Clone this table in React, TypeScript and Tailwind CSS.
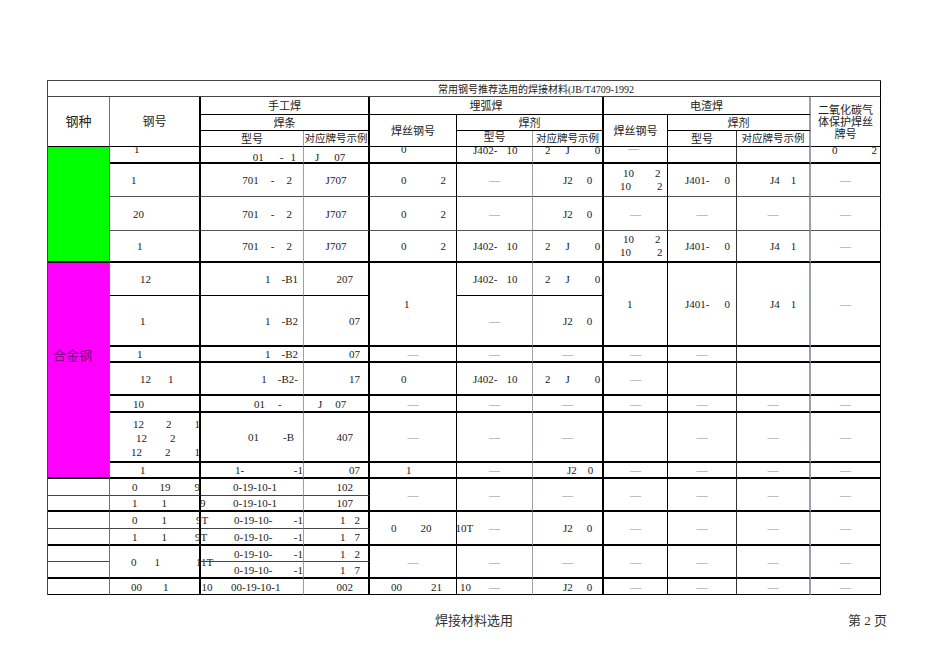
import React from 'react';

const COL: Record<number, string> = {
  1: 'col-start-1', 2: 'col-start-2', 3: 'col-start-3', 4: 'col-start-4', 5: 'col-start-5', 6: 'col-start-6',
  7: 'col-start-7', 8: 'col-start-8', 9: 'col-start-9', 10: 'col-start-10', 11: 'col-start-11',
};
const CSPAN: Record<number, string> = { 1: 'col-span-1', 2: 'col-span-2', 3: 'col-span-3', 11: 'col-span-11' };
const ROW: Record<number, string> = {
  1: 'row-start-1', 2: 'row-start-2', 3: 'row-start-3', 4: 'row-start-4', 5: 'row-start-5', 6: 'row-start-6',
  7: 'row-start-7', 8: 'row-start-8', 9: 'row-start-9', 10: 'row-start-10', 11: 'row-start-11', 12: 'row-start-12',
  13: 'row-start-13', 14: 'row-start-14', 15: 'row-start-15', 16: 'row-start-16', 17: 'row-start-17',
  18: 'row-start-18', 19: 'row-start-19', 20: 'row-start-20', 21: 'row-start-21', 22: 'row-start-22',
};
const RSPAN: Record<number, string> = { 1: 'row-span-1', 2: 'row-span-2', 3: 'row-span-3', 4: 'row-span-4', 7: 'row-span-7' };

// right edge line per column
const RIGHT: Record<number, string> = {
  1: 'border-r border-r-gray-500',
  2: 'border-r-2 border-r-black',
  3: 'border-r border-r-gray-400',
  4: 'border-r-2 border-r-black',
  5: 'border-r border-r-black',
  6: 'border-r border-r-gray-400',
  7: 'border-r-2 border-r-black',
  8: 'border-r border-r-black',
  9: 'border-r border-r-[#333]',
  10: 'border-r-2 border-r-gray-400',
  11: 'border-r border-r-black',
};

// bottom line per row
const BOTTOM: Record<number, string> = {
  1: 'border-b border-b-[#444]',
  2: 'border-b border-b-black',
  3: 'border-b border-b-black',
  4: 'border-b border-b-black',
  5: 'border-b-2 border-b-black',
  6: 'border-b border-b-[#555]',
  7: 'border-b border-b-[#555]',
  8: 'border-b-2 border-b-black',
  9: 'border-b border-b-black',
  10: 'border-b-2 border-b-black',
  11: 'border-b-2 border-b-black',
  12: 'border-b-2 border-b-black',
  13: 'border-b-2 border-b-black',
  14: 'border-b-2 border-b-black',
  15: 'border-b-2 border-b-black',
  16: 'border-b border-b-[#444]',
  17: 'border-b-2 border-b-black',
  18: 'border-b border-b-[#444]',
  19: 'border-b-2 border-b-black',
  20: 'border-b border-b-[#444]',
  21: 'border-b-2 border-b-black',
  22: 'border-b border-b-black',
};

type CellProps = {
  c: number;
  r: number;
  cs?: number;
  rs?: number;
  al?: string;
  bg?: string;
  children?: React.ReactNode;
};

const Cell: React.FC<CellProps> = ({ c, r, cs = 1, rs = 1, al = 'items-center justify-center', bg = '', children }) => {
  const lastC = c + cs - 1;
  const lastR = r + rs - 1;
  return (
    <div className={`flex whitespace-pre ${COL[c]} ${CSPAN[cs]} ${ROW[r]} ${RSPAN[rs]} ${RIGHT[lastC]} ${BOTTOM[lastR]} ${al} ${bg}`}>
      {children}
    </div>
  );
};

const Dash = () => <span className="text-[#8c8c8c]">—</span>;

// shared cell contents
const E701 = (
  <>
    <span>701</span>
    <span className="ml-[12px]">-</span>
    <span className="ml-[12px]">2</span>
  </>
);
const A701 = 'items-center justify-end pr-[11px]';

const ZeroTwo = (
  <>
    <span>0</span>
    <span className="ml-[34px]">2</span>
  </>
);
const AZeroTwo = 'items-center justify-start pl-[31px]';

const J2 = (
  <>
    <span>J2</span>
    <span className="ml-[14px]">0</span>
  </>
);
const AJ2 = 'items-center justify-start pl-[30px]';

const J402 = (
  <>
    <span>J402-</span>
    <span className="ml-[9px]">10</span>
  </>
);
const AJ402 = 'items-center justify-start pl-[16px]';

const TwoJ0 = (
  <>
    <span>2</span>
    <span className="ml-[15px]">J</span>
    <span className="ml-[25px]">0</span>
  </>
);
const ATwoJ0 = 'items-center justify-start pl-[12px]';

const TenTwo = (
  <div className="flex flex-col leading-[13px]">
    <div className="pl-[19px]">
      <span>10</span>
      <span className="ml-[21px]">2</span>
    </div>
    <div className="pl-[16px]">
      <span>10</span>
      <span className="ml-[26px]">2</span>
    </div>
  </div>
);

const J401 = (
  <>
    <span>J401-</span>
    <span className="ml-[15px]">0</span>
  </>
);
const AJ401 = 'items-center justify-start pl-[17px]';

const J41 = (
  <>
    <span>J4</span>
    <span className="ml-[11px]">1</span>
  </>
);
const AJ41 = 'items-center justify-start pl-[33px]';

const A0191 = 'items-center justify-between pl-[33px]';
const Split0191 = (
  <>
    <span>0-19-10-</span>
    <span>-1</span>
  </>
);

const App: React.FC = () => {
  return (
    <div className="w-[950px] h-[672px] bg-white text-[#222] font-['Liberation_Serif','Noto_Sans_CJK_SC',serif]">
      <div className="pt-[80px] pl-[47px]">
        <div className="grid w-max border-l border-t border-[#444] text-[11px] leading-[14px] grid-cols-[62px_91px_103px_66px_87px_76px_71px_64px_69px_74px_70px] grid-rows-[16px_18px_16px_16px_17px_33px_34px_32px_33px_51px_16px_33px_17px_50px_16px_17px_16px_17px_17px_16px_17px_16px]">
          {/* Title */}
          <Cell c={1} r={1} cs={11} al="items-end justify-start pl-[390px] text-[10px] leading-[13px]">
            常用钢号推荐选用的焊接材料(JB/T4709-1992
          </Cell>

          {/* Header */}
          <Cell c={1} r={2} rs={3} al="items-center justify-center text-[13px]">钢种</Cell>
          <Cell c={2} r={2} rs={3} al="items-center justify-center text-[12px]">钢号</Cell>
          <Cell c={3} r={2} cs={2}>手工焊</Cell>
          <Cell c={3} r={3} cs={2}>焊条</Cell>
          <Cell c={3} r={4}>型号</Cell>
          <Cell c={4} r={4} al="items-center justify-center text-[10.5px]">对应牌号示例</Cell>
          <Cell c={5} r={2} cs={3}>埋弧焊</Cell>
          <Cell c={5} r={3} rs={2}>焊丝钢号</Cell>
          <Cell c={6} r={3} cs={2}>焊剂</Cell>
          <Cell c={6} r={4} al="items-start justify-center"><span className="-mt-[1px]">型号</span></Cell>
          <Cell c={7} r={4} al="items-center justify-center text-[10.5px]">对应牌号示例</Cell>
          <Cell c={8} r={2} cs={3}>电渣焊</Cell>
          <Cell c={8} r={3} rs={2}>焊丝钢号</Cell>
          <Cell c={9} r={3} cs={2}>焊剂</Cell>
          <Cell c={9} r={4}>型号</Cell>
          <Cell c={10} r={4} al="items-center justify-center text-[10.5px]">对应牌号示例</Cell>
          <Cell c={11} r={2} rs={3} al="flex-col items-center justify-center leading-[12px]">
            <div>二氧化碳气</div>
            <div>体保护焊丝</div>
            <div>牌号</div>
          </Cell>

          {/* Steel kind column */}
          <Cell c={1} r={5} rs={4} bg="bg-[#00ff00]" />
          <Cell c={1} r={9} rs={7} al="items-start justify-start pl-[5px] pt-[86px] text-[13px] text-[#800080]" bg="bg-[#ff00ff]">
            合金钢
          </Cell>
          <Cell c={1} r={16} />
          <Cell c={1} r={17} />
          <Cell c={1} r={18} />
          <Cell c={1} r={19} />
          <Cell c={1} r={20} />
          <Cell c={1} r={21} />
          <Cell c={1} r={22} />

          {/* Row 5 */}
          <Cell c={2} r={5} al="items-start justify-start pl-[24px]"><span className="-mt-[5px]">1</span></Cell>
          <Cell c={3} r={5} al="items-start justify-end pr-[7px]">
            <span className="mt-[3px]">01</span>
            <span className="mt-[3px] ml-[16px]">-</span>
            <span className="mt-[3px] ml-[7px]">1</span>
          </Cell>
          <Cell c={4} r={5} al="items-start justify-start pl-[11px]">
            <span className="mt-[3px]">J</span>
            <span className="mt-[3px] ml-[15px]">07</span>
          </Cell>
          <Cell c={5} r={5} al="items-start justify-start pl-[31px]"><span className="-mt-[5px]">0</span></Cell>
          <Cell c={6} r={5} al="items-start justify-start pl-[16px]">
            <span className="-mt-[4px]">J402-</span>
            <span className="-mt-[4px] ml-[9px]">10</span>
          </Cell>
          <Cell c={7} r={5} al="items-start justify-start pl-[12px]">
            <span className="-mt-[4px]">2</span>
            <span className="-mt-[4px] ml-[15px]">J</span>
            <span className="-mt-[4px] ml-[25px]">0</span>
          </Cell>
          <Cell c={8} r={5} al="items-start justify-start pl-[24px]"><span className="-mt-[6px]"><Dash /></span></Cell>
          <Cell c={9} r={5} />
          <Cell c={10} r={5} />
          <Cell c={11} r={5} al="items-start justify-start pl-[21px]">
            <span className="-mt-[4px]">0</span>
            <span className="-mt-[4px] ml-[34px]">2</span>
          </Cell>

          {/* Row 6 */}
          <Cell c={2} r={6} al="items-center justify-start pl-[21px]">1</Cell>
          <Cell c={3} r={6} al={A701}>{E701}</Cell>
          <Cell c={4} r={6}>J707</Cell>
          <Cell c={5} r={6} al={AZeroTwo}>{ZeroTwo}</Cell>
          <Cell c={6} r={6}><Dash /></Cell>
          <Cell c={7} r={6} al={AJ2}>{J2}</Cell>
          <Cell c={8} r={6} al="items-center justify-start">{TenTwo}</Cell>
          <Cell c={9} r={6} al={AJ401}>{J401}</Cell>
          <Cell c={10} r={6} al={AJ41}>{J41}</Cell>
          <Cell c={11} r={6}><Dash /></Cell>

          {/* Row 7 */}
          <Cell c={2} r={7} al="items-center justify-start pl-[23px]">20</Cell>
          <Cell c={3} r={7} al={A701}>{E701}</Cell>
          <Cell c={4} r={7}>J707</Cell>
          <Cell c={5} r={7} al={AZeroTwo}>{ZeroTwo}</Cell>
          <Cell c={6} r={7}><Dash /></Cell>
          <Cell c={7} r={7} al={AJ2}>{J2}</Cell>
          <Cell c={8} r={7}><Dash /></Cell>
          <Cell c={9} r={7}><Dash /></Cell>
          <Cell c={10} r={7}><Dash /></Cell>
          <Cell c={11} r={7}><Dash /></Cell>

          {/* Row 8 */}
          <Cell c={2} r={8} al="items-center justify-start pl-[27px]">1</Cell>
          <Cell c={3} r={8} al={A701}>{E701}</Cell>
          <Cell c={4} r={8}>J707</Cell>
          <Cell c={5} r={8} al={AZeroTwo}>{ZeroTwo}</Cell>
          <Cell c={6} r={8} al={AJ402}>{J402}</Cell>
          <Cell c={7} r={8} al={ATwoJ0}>{TwoJ0}</Cell>
          <Cell c={8} r={8} al="items-center justify-start">{TenTwo}</Cell>
          <Cell c={9} r={8} al={AJ401}>{J401}</Cell>
          <Cell c={10} r={8} al={AJ41}>{J41}</Cell>
          <Cell c={11} r={8}><Dash /></Cell>

          {/* Row 9 */}
          <Cell c={2} r={9} al="items-center justify-start pl-[30px]">12</Cell>
          <Cell c={3} r={9} al="items-center justify-end pr-[5px]">
            <span>1</span>
            <span className="ml-[11px]">-B1</span>
          </Cell>
          <Cell c={4} r={9} al="items-center justify-end pr-[15px]">207</Cell>
          <Cell c={5} r={9} rs={2} al="items-center justify-start pl-[34px]">1</Cell>
          <Cell c={6} r={9} al={AJ402}>{J402}</Cell>
          <Cell c={7} r={9} al={ATwoJ0}>{TwoJ0}</Cell>
          <Cell c={8} r={9} rs={2} al="items-center justify-start pl-[23px]">1</Cell>
          <Cell c={9} r={9} rs={2} al={AJ401}>{J401}</Cell>
          <Cell c={10} r={9} rs={2} al={AJ41}>{J41}</Cell>
          <Cell c={11} r={9} rs={2}><Dash /></Cell>

          {/* Row 10 */}
          <Cell c={2} r={10} al="items-center justify-start pl-[30px]">1</Cell>
          <Cell c={3} r={10} al="items-center justify-end pr-[5px]">
            <span>1</span>
            <span className="ml-[11px]">-B2</span>
          </Cell>
          <Cell c={4} r={10} al="items-center justify-end pr-[8px]">07</Cell>
          <Cell c={6} r={10}><Dash /></Cell>
          <Cell c={7} r={10} al={AJ2}>{J2}</Cell>

          {/* Row 11 */}
          <Cell c={2} r={11} al="items-center justify-start pl-[27px]">1</Cell>
          <Cell c={3} r={11} al="items-center justify-end pr-[5px]">
            <span>1</span>
            <span className="ml-[11px]">-B2</span>
          </Cell>
          <Cell c={4} r={11} al="items-center justify-end pr-[8px]">07</Cell>
          <Cell c={5} r={11}><Dash /></Cell>
          <Cell c={6} r={11}><Dash /></Cell>
          <Cell c={7} r={11}><Dash /></Cell>
          <Cell c={8} r={11}><Dash /></Cell>
          <Cell c={9} r={11}><Dash /></Cell>
          <Cell c={10} r={11} />
          <Cell c={11} r={11} />

          {/* Row 12 */}
          <Cell c={2} r={12} al="items-center justify-start pl-[30px]">
            <span>12</span>
            <span className="ml-[17px]">1</span>
          </Cell>
          <Cell c={3} r={12} al="items-center justify-end pr-[5px]">
            <span>1</span>
            <span className="ml-[11px]">-B2-</span>
          </Cell>
          <Cell c={4} r={12} al="items-center justify-end pr-[8px]">17</Cell>
          <Cell c={5} r={12} al="items-center justify-start pl-[31px]">0</Cell>
          <Cell c={6} r={12} al={AJ402}>{J402}</Cell>
          <Cell c={7} r={12} al={ATwoJ0}>{TwoJ0}</Cell>
          <Cell c={8} r={12}><Dash /></Cell>
          <Cell c={9} r={12} />
          <Cell c={10} r={12} />
          <Cell c={11} r={12} />

          {/* Row 13 */}
          <Cell c={2} r={13} al="items-center justify-start pl-[23px]">10</Cell>
          <Cell c={3} r={13} al="items-center justify-start pl-[53px]">
            <span>01</span>
            <span className="ml-[13px]">-</span>
          </Cell>
          <Cell c={4} r={13} al="items-center justify-start pl-[14px]">
            <span>J</span>
            <span className="ml-[13px]">07</span>
          </Cell>
          <Cell c={5} r={13}><Dash /></Cell>
          <Cell c={6} r={13}><Dash /></Cell>
          <Cell c={7} r={13}><Dash /></Cell>
          <Cell c={8} r={13}><Dash /></Cell>
          <Cell c={9} r={13}><Dash /></Cell>
          <Cell c={10} r={13}><Dash /></Cell>
          <Cell c={11} r={13}><Dash /></Cell>

          {/* Row 14 */}
          <Cell c={2} r={14} al="flex-col justify-center items-start leading-[14px] pt-[2px]">
            <div className="pl-[23px]">
              <span>12</span>
              <span className="ml-[22px]">2</span>
              <span className="ml-[23px]">1</span>
            </div>
            <div className="pl-[26px]">
              <span>12</span>
              <span className="ml-[23px]">2</span>
            </div>
            <div className="pl-[21px]">
              <span>12</span>
              <span className="ml-[23px]">2</span>
              <span className="ml-[24px]">1</span>
            </div>
          </Cell>
          <Cell c={3} r={14} al="items-center justify-start pl-[47px]">
            <span>01</span>
            <span className="ml-[24px]">-B</span>
          </Cell>
          <Cell c={4} r={14} al="items-center justify-end pr-[15px]">407</Cell>
          <Cell c={5} r={14}><Dash /></Cell>
          <Cell c={6} r={14}><Dash /></Cell>
          <Cell c={7} r={14}><Dash /></Cell>
          <Cell c={8} r={14} />
          <Cell c={9} r={14}><Dash /></Cell>
          <Cell c={10} r={14}><Dash /></Cell>
          <Cell c={11} r={14}><Dash /></Cell>

          {/* Row 15 */}
          <Cell c={2} r={15} al="items-center justify-start pl-[30px]">1</Cell>
          <Cell c={3} r={15} al="items-center justify-between pl-[34px]">
            <span>1-</span>
            <span>-1</span>
          </Cell>
          <Cell c={4} r={15} al="items-center justify-end pr-[8px]">07</Cell>
          <Cell c={5} r={15} al="items-center justify-start pl-[36px]">1</Cell>
          <Cell c={6} r={15}><Dash /></Cell>
          <Cell c={7} r={15} al="items-center justify-start pl-[34px]">
            <span>J2</span>
            <span className="ml-[11px]">0</span>
          </Cell>
          <Cell c={8} r={15}><Dash /></Cell>
          <Cell c={9} r={15}><Dash /></Cell>
          <Cell c={10} r={15}><Dash /></Cell>
          <Cell c={11} r={15}><Dash /></Cell>

          {/* Rows 16-17 */}
          <Cell c={2} r={16} al="items-center justify-start pl-[22px]">
            <span>0</span>
            <span className="ml-[22px]">19</span>
            <span className="ml-[24px]">9</span>
          </Cell>
          <Cell c={3} r={16} al="items-center justify-start pl-[32px]">0-19-10-1</Cell>
          <Cell c={4} r={16} al="items-center justify-end pr-[15px]">102</Cell>
          <Cell c={5} r={16} rs={2}><Dash /></Cell>
          <Cell c={6} r={16} rs={2}><Dash /></Cell>
          <Cell c={7} r={16} rs={2}><Dash /></Cell>
          <Cell c={8} r={16} rs={2}><Dash /></Cell>
          <Cell c={9} r={16} rs={2}><Dash /></Cell>
          <Cell c={10} r={16} rs={2}><Dash /></Cell>
          <Cell c={11} r={16} rs={2}><Dash /></Cell>

          <Cell c={2} r={17} al="items-center justify-start pl-[22px]">
            <span>1</span>
            <span className="ml-[24px]">1</span>
            <span className="ml-[33px]">9</span>
          </Cell>
          <Cell c={3} r={17} al="items-center justify-start pl-[32px]">0-19-10-1</Cell>
          <Cell c={4} r={17} al="items-center justify-end pr-[15px]">107</Cell>

          {/* Rows 18-19 */}
          <Cell c={2} r={18} al="items-center justify-start pl-[22px]">
            <span>0</span>
            <span className="ml-[24px]">1</span>
            <span className="ml-[29px]">9T</span>
          </Cell>
          <Cell c={3} r={18} al={A0191}>{Split0191}</Cell>
          <Cell c={4} r={18} al="items-center justify-end pr-[8px]">
            <span>1</span>
            <span className="ml-[9px]">2</span>
          </Cell>
          <Cell c={5} r={18} rs={2} al="items-center justify-start pl-[21px]">
            <span>0</span>
            <span className="ml-[24px]">20</span>
            <span className="ml-[24px]">10T</span>
          </Cell>
          <Cell c={6} r={18} rs={2}><Dash /></Cell>
          <Cell c={7} r={18} rs={2} al={AJ2}>{J2}</Cell>
          <Cell c={8} r={18} rs={2}><Dash /></Cell>
          <Cell c={9} r={18} rs={2}><Dash /></Cell>
          <Cell c={10} r={18} rs={2}><Dash /></Cell>
          <Cell c={11} r={18} rs={2}><Dash /></Cell>

          <Cell c={2} r={19} al="items-center justify-start pl-[22px]">
            <span>1</span>
            <span className="ml-[24px]">1</span>
            <span className="ml-[28px]">9T</span>
          </Cell>
          <Cell c={3} r={19} al={A0191}>{Split0191}</Cell>
          <Cell c={4} r={19} al="items-center justify-end pr-[8px]">
            <span>1</span>
            <span className="ml-[9px]">7</span>
          </Cell>

          {/* Rows 20-21 */}
          <Cell c={2} r={20} rs={2} al="items-center justify-start pl-[21px]">
            <span>0</span>
            <span className="ml-[18px]">1</span>
            <span className="ml-[36px]">11T</span>
          </Cell>
          <Cell c={3} r={20} al={A0191}>{Split0191}</Cell>
          <Cell c={4} r={20} al="items-center justify-end pr-[8px]">
            <span>1</span>
            <span className="ml-[9px]">2</span>
          </Cell>
          <Cell c={5} r={20} rs={2}><Dash /></Cell>
          <Cell c={6} r={20} rs={2}><Dash /></Cell>
          <Cell c={7} r={20} rs={2}><Dash /></Cell>
          <Cell c={8} r={20} rs={2}><Dash /></Cell>
          <Cell c={9} r={20} rs={2}><Dash /></Cell>
          <Cell c={10} r={20} rs={2}><Dash /></Cell>
          <Cell c={11} r={20} rs={2}><Dash /></Cell>

          <Cell c={3} r={21} al={A0191}>{Split0191}</Cell>
          <Cell c={4} r={21} al="items-center justify-end pr-[8px]">
            <span>1</span>
            <span className="ml-[9px]">7</span>
          </Cell>

          {/* Row 22 */}
          <Cell c={2} r={22} al="items-center justify-start pl-[21px]">
            <span>00</span>
            <span className="ml-[21px]">1</span>
            <span className="ml-[33px]">10</span>
          </Cell>
          <Cell c={3} r={22} al="items-center justify-start pl-[30px]">00-19-10-1</Cell>
          <Cell c={4} r={22} al="items-center justify-end pr-[15px]">002</Cell>
          <Cell c={5} r={22} al="items-center justify-start pl-[21px]">
            <span>00</span>
            <span className="ml-[29px]">21</span>
            <span className="ml-[18px]">10</span>
          </Cell>
          <Cell c={6} r={22}><Dash /></Cell>
          <Cell c={7} r={22} al={AJ2}>{J2}</Cell>
          <Cell c={8} r={22}><Dash /></Cell>
          <Cell c={9} r={22}><Dash /></Cell>
          <Cell c={10} r={22}><Dash /></Cell>
          <Cell c={11} r={22}><Dash /></Cell>
        </div>
      </div>

      {/* Footer */}
      <div className="flex justify-between w-[950px] pl-[435px] pr-[63px] mt-[18px] text-[13px] leading-[16px] text-[#333]">
        <span>焊接材料选用</span>
        <span>第 2 页</span>
      </div>
    </div>
  );
};

export default App;
